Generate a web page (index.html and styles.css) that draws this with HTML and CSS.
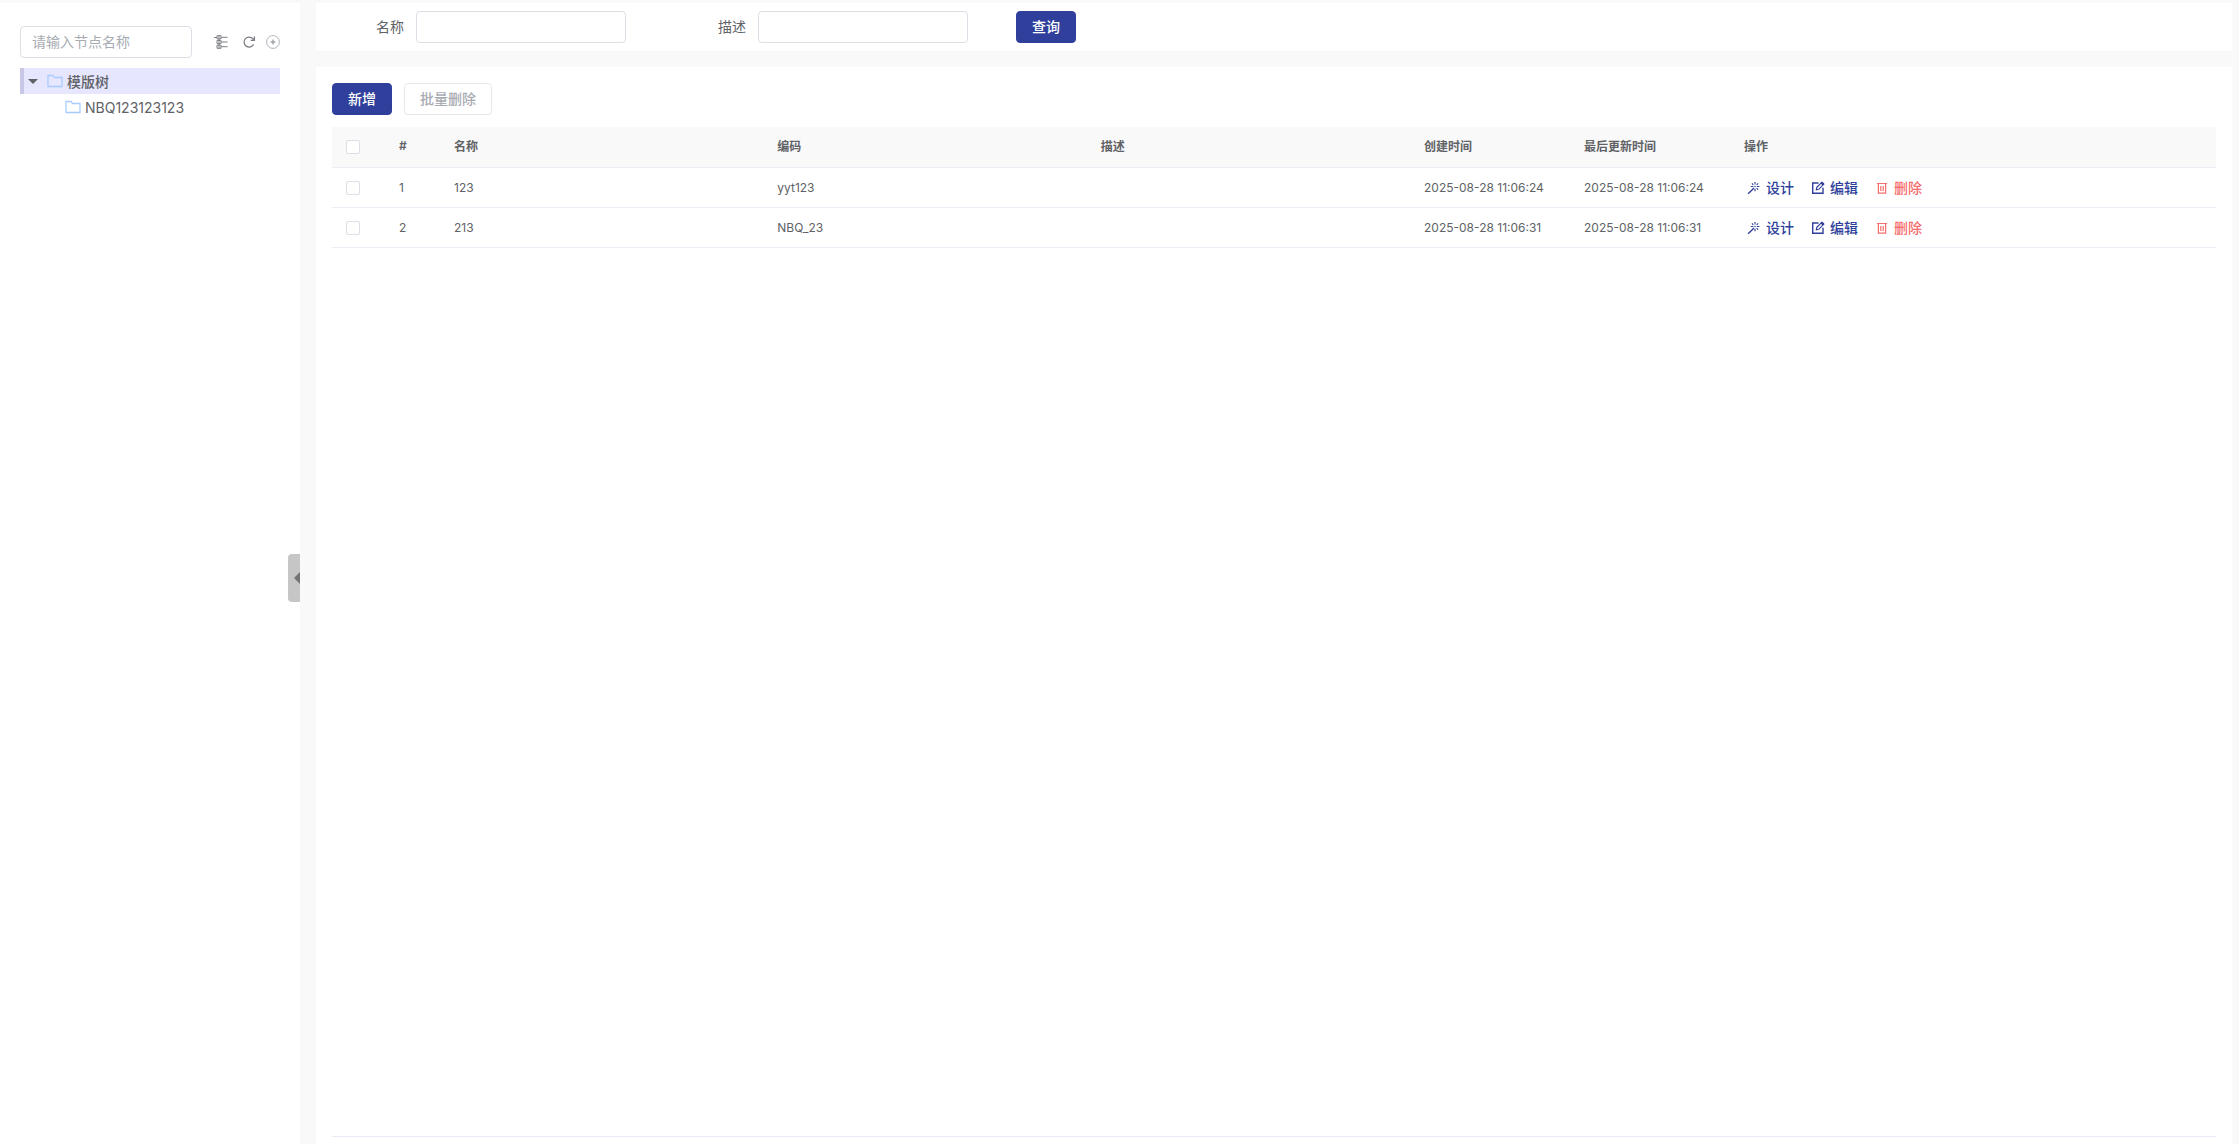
FILE: index.html
```html
<!DOCTYPE html>
<html lang="zh-CN">
<head>
<meta charset="UTF-8">
<meta name="viewport" content="width=device-width, initial-scale=1">
<title>模版管理</title>
<link rel="stylesheet" href="styles.css">
</head>
<body>

<svg class="sprite" aria-hidden="true">
<symbol id="i-folder" viewBox="0 0 16 14">
<path d="M1 1.5h5l1.6 2H15v9H1z" fill="none" stroke="currentColor" stroke-width="1.3"/>
</symbol>
<symbol id="i-wand" viewBox="0 0 14 14">
<path d="M1.2 12.8 7 7" fill="none" stroke="currentColor" stroke-width="1.4"/>
<path d="M8 1v2.4M8 7.8v2.4M3.8 5.5h2.4M9.8 5.5h2.6M4.9 2.4l1.4 1.4M9.6 7.1l1.5 1.5M9.7 3.9l1.5-1.5M7.3 5.5h1.4" fill="none" stroke="currentColor" stroke-width="1.1"/>
</symbol>
<symbol id="i-edit" viewBox="0 0 14 14">
<path d="M7.5 2H1.7v10.3H12V6.8" fill="none" stroke="currentColor" stroke-width="1.4"/>
<path d="M5.3 8.8l.5-2.4 5-5 1.9 1.9-5 5z" fill="none" stroke="currentColor" stroke-width="1.2"/>
<path d="M9.6 2.6l1.8-1.9 2 2-1.8 1.9z" fill="currentColor"/>
</symbol>
<symbol id="i-trash" viewBox="0 0 14 14">
<path d="M2 2.5h10M3.4 2.5v9.6h7.2V2.5M5.8 5v5M8.2 5v5" fill="none" stroke="currentColor" stroke-width="1.2"/>
</symbol>
</svg>

<div class="layout">
<aside class="sidebar">
<div class="tree-tools">
<input class="input" type="text" placeholder="请输入节点名称" aria-label="节点名称">
<button class="icon-btn" type="button" aria-label="展开">
<svg viewBox="0 0 14 14" width="14" height="14"><path d="M0 2.5h3M3 .7h4v3.2H3zM3 5.4h4v3.2H3zM3 10.1h4v3.2H3zM5 .7v12.6M7 2.3h6.6M7 7h6.6M7 11.7h6.6" fill="none" stroke="currentColor" stroke-width="1"/></svg>
</button>
<button class="icon-btn" type="button" aria-label="刷新">
<svg viewBox="0 0 14 14" width="14" height="14"><path d="M11.6 9.2A5 5 0 1 1 11 3.9l1 1.3M12.4 1.6v3.8H8.7" fill="none" stroke="currentColor" stroke-width="1.3"/></svg>
</button>
<button class="icon-btn light" type="button" aria-label="新增节点">
<svg viewBox="0 0 14 14" width="14" height="14"><circle cx="7" cy="7" r="6.4" fill="none" stroke="currentColor" stroke-width=".9"/><path d="M7 4.6v4.8M4.6 7h4.8" stroke="currentColor" stroke-width="1.4"/><circle cx="7" cy="7" r="1.5" fill="currentColor"/></svg>
</button>
</div>
<ul class="tree">
<li>
<div class="node active"><span class="caret"></span><svg class="folder"><use href="#i-folder"/></svg><span>模版树</span></div>
<ul>
<li><div class="node child"><svg class="folder"><use href="#i-folder"/></svg><span>NBQ123123123</span></div></li>
</ul>
</li>
</ul>
<button class="collapse" type="button" aria-label="收起"></button>
</aside>

<main class="main">
<form class="card search">
<div class="field"><label for="name">名称</label><input class="input" id="name" type="text"></div>
<div class="field"><label for="desc">描述</label><input class="input" id="desc" type="text"></div>
<button class="btn primary query" type="button">查询</button>
</form>

<section class="card content">
<div class="toolbar">
<button class="btn primary" type="button">新增</button>
<button class="btn" type="button" disabled>批量删除</button>
</div>
<div class="table-wrap">
<table class="table">
<colgroup>
<col class="w-sm"><col class="w-sm"><col><col><col><col class="w-time"><col class="w-time"><col class="w-ops">
</colgroup>
<thead>
<tr>
<th class="sel"><input type="checkbox" aria-label="全选"></th>
<th>#</th>
<th>名称</th>
<th>编码</th>
<th>描述</th>
<th>创建时间</th>
<th>最后更新时间</th>
<th>操作</th>
</tr>
</thead>
<tbody>
<tr>
<td class="sel"><input type="checkbox" aria-label="选择 123"></td>
<td>1</td>
<td>123</td>
<td>yyt123</td>
<td></td>
<td>2025-08-28 11:06:24</td>
<td>2025-08-28 11:06:24</td>
<td>
<div class="ops">
<button class="link" type="button"><svg><use href="#i-wand"/></svg>设计</button>
<button class="link" type="button"><svg><use href="#i-edit"/></svg>编辑</button>
<button class="link danger" type="button"><svg><use href="#i-trash"/></svg>删除</button>
</div>
</td>
</tr>
<tr>
<td class="sel"><input type="checkbox" aria-label="选择 213"></td>
<td>2</td>
<td>213</td>
<td>NBQ_23</td>
<td></td>
<td>2025-08-28 11:06:31</td>
<td>2025-08-28 11:06:31</td>
<td>
<div class="ops">
<button class="link" type="button"><svg><use href="#i-wand"/></svg>设计</button>
<button class="link" type="button"><svg><use href="#i-edit"/></svg>编辑</button>
<button class="link danger" type="button"><svg><use href="#i-trash"/></svg>删除</button>
</div>
</td>
</tr>
</tbody>
</table>
</div>
</section>
</main>
</div>

</body>
</html>
```
FILE: styles.css
```css
* {
box-sizing: border-box;
}
body {
margin: 0;
background: #f9f9f9;
color: #606266;
font-family: Inter, "Noto Sans CJK SC", sans-serif;
font-size: 14px;
}
input, button {
font-family: inherit;
font-size: inherit;
}
button {
cursor: pointer;
}
ul {
margin: 0;
padding: 0;
list-style: none;
}
.sprite {
display: none;
}
.layout {
display: flex;
gap: 16px;
min-height: 100vh;
padding: 3px 7px 0 0;
}
.input {
height: 32px;
padding: 0 11px 2px;
border: 1px solid #dcdfe6;
border-radius: 4px;
background: #fff;
color: #606266;
outline: none;
}
.input::placeholder {
color: #a8abb2;
}

/* sidebar */
.sidebar {
position: relative;
flex: 0 0 300px;
min-width: 0;
padding: 23px 20px;
background: #fff;
}
.tree-tools {
display: flex;
align-items: center;
gap: 14px;
margin-bottom: 10px;
}
.tree-tools .input {
flex: 1;
min-width: 0;
margin-right: 8px;
}
.icon-btn {
display: flex;
padding: 0;
border: 0;
background: none;
color: #7d7f84;
}
.icon-btn.light {
margin-left: -4px;
color: #a8abb2;
}
.node {
display: flex;
align-items: center;
height: 26px;
border-left: 4px solid transparent;
padding-left: 4px;
cursor: pointer;
}
.node.active {
background: #e6e6ff;
border-left-color: #c8c8e6;
font-weight: 500;
}
.node.child {
padding-left: 41px;
}
.caret {
margin-right: 9px;
border: 5px solid transparent;
border-top-color: #606266;
border-bottom: 0;
}
.folder {
width: 16px;
height: 14px;
margin-right: 4px;
color: #a8ccff;
}
.collapse {
position: absolute;
top: 50%;
right: 0;
width: 12px;
height: 48px;
margin-top: -20px;
padding: 0;
border: 0;
border-radius: 4px 0 0 4px;
background: #c6c6c6;
}
.collapse::after {
content: "";
display: block;
width: 0;
margin-left: auto;
border: 6px solid transparent;
border-right-color: #747474;
border-left: 0;
}

/* right side */
.main {
display: flex;
flex: 1;
flex-direction: column;
gap: 16px;
min-width: 0;
}
.card {
background: #fff;
}
.search {
display: flex;
gap: 32px;
padding: 8px 0;
}
.field {
display: flex;
align-items: center;
}
.field label {
width: 100px;
padding: 0 12px 2px 0;
text-align: right;
}
.field .input {
width: 210px;
}
.btn {
height: 32px;
padding: 0 15px 2px;
border: 1px solid #dcdfe6;
border-radius: 4px;
background: #fff;
font-weight: 500;
}
.btn.primary {
border-color: #303f9b;
background: #303f9b;
color: #fff;
}
.btn:disabled {
border-color: #e4e7ed;
color: #a8abb2;
cursor: not-allowed;
}
.query {
margin-left: 16px;
}
.content {
display: flex;
flex: 1;
flex-direction: column;
padding: 16px 16px 7px;
}
.toolbar {
display: flex;
gap: 12px;
margin-bottom: 12px;
}
.table-wrap {
flex: 1;
border-bottom: 1px solid #e6ebf5;
}
.table {
width: 100%;
table-layout: fixed;
border-collapse: separate;
border-spacing: 0;
font-size: 12px;
}
.w-sm {
width: 55px;
}
.w-time {
width: 160px;
}
.w-ops {
width: 484px;
}
.table th, .table td {
height: 40px;
padding: 0 12px 1px;
border-bottom: 1px solid #ebeef5;
text-align: left;
white-space: nowrap;
}
.table th {
height: 41px;
padding-bottom: 3px;
background: #f9f9f9;
font-weight: 600;
}
.table .sel {
padding: 0 14px;
}
.table input {
display: block;
width: 14px;
height: 14px;
margin: 0;
appearance: none;
border: 1px solid #dcdfe6;
border-radius: 2px;
background: #fff;
}
.table input:checked {
background: #303f9b;
}
.ops {
display: flex;
gap: 17px;
padding: 2px 3px 0;
}
.link {
display: flex;
align-items: center;
gap: 5px;
padding: 0;
border: 0;
background: none;
color: #303f9b;
font-size: 14px;
font-weight: 500;
line-height: 20px;
}
.link svg {
width: 14px;
height: 14px;
}
.link.danger {
color: #f56c6c;
}
```
